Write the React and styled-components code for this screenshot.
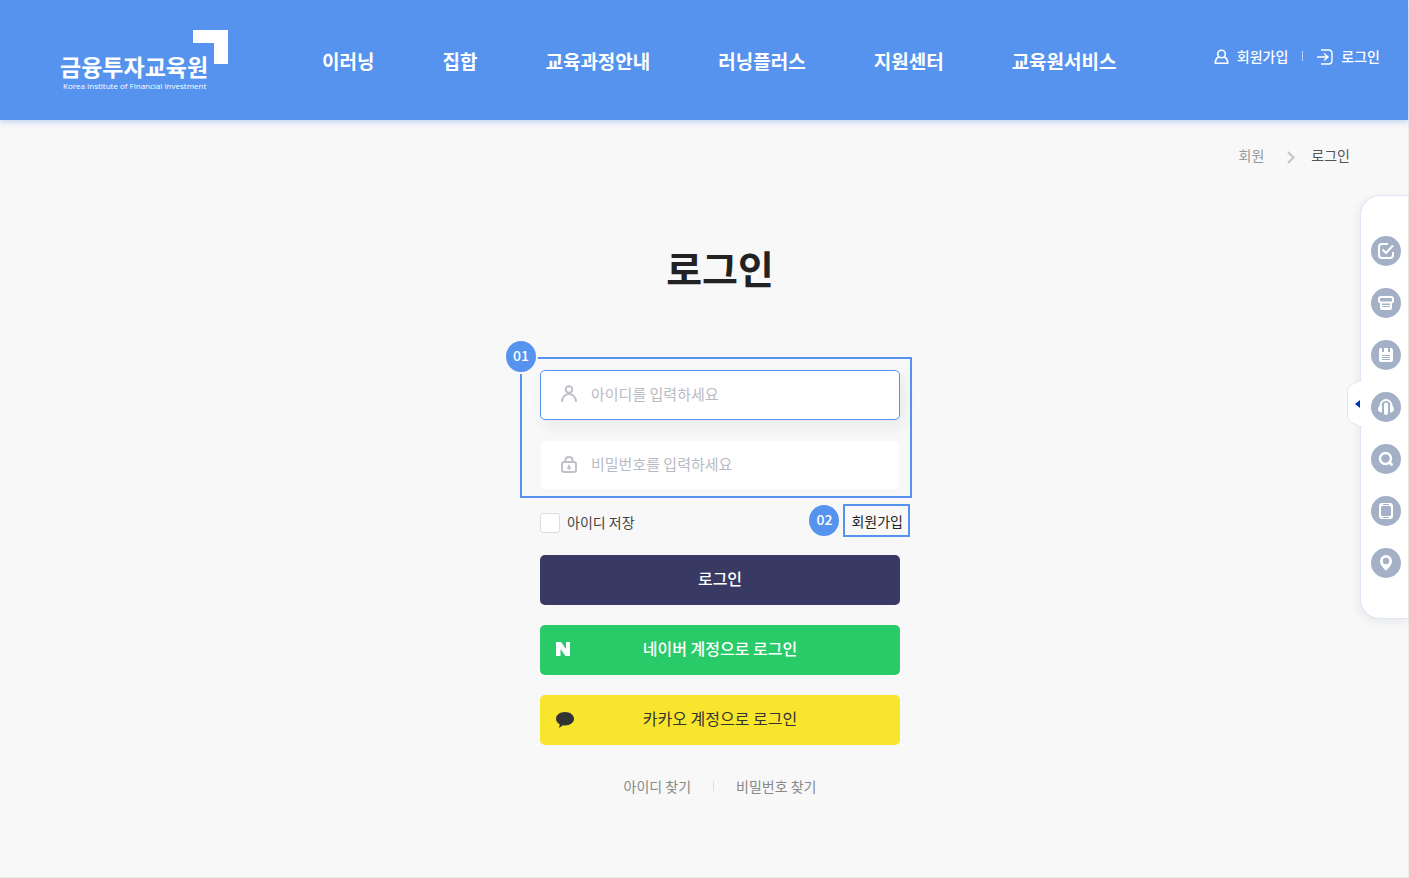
import { useState } from 'react'
import styled, { createGlobalStyle } from 'styled-components'

const GlobalStyle = createGlobalStyle`
    * {
        box-sizing: border-box;
    }

    body {
        margin: 0;
        background-color: #f8f8f8;
        font-family: "Noto Sans CJK KR", "Noto Sans", sans-serif;
        font-size: 14px;
        color: #222;
    }

    a {
        color: inherit;
        text-decoration: none;
    }

    button, input {
        font-family: inherit;
    }
`

const Page = styled.div`
    min-height: 100vh;
    border-right: 1px solid #ececec;
    border-bottom: 1px solid #ececec;
`

const Header = styled.header`
    display: flex;
    align-items: center;
    height: 120px;
    padding: 0 28px 0 60px;
    background-color: #5693ef;
    box-shadow: 0 2px 6px rgba(86, 147, 239, 0.35);
    color: white;
`

const Logo = styled.a`
    display: block;
    line-height: 0;
    flex-shrink: 0;
`

const Nav = styled.nav`
    display: flex;
    gap: 68px;
    margin-left: 94px;
    padding-top: 2px;
    font-size: 19px;
    line-height: 28px;
    font-weight: 700;
    white-space: nowrap;
`

const UserMenu = styled.div`
    display: flex;
    align-items: center;
    margin-left: auto;
    padding-bottom: 8px;
    line-height: 20px;
    font-weight: 500;
    white-space: nowrap;

    a {
        display: flex;
        align-items: center;
        gap: 8px;
    }

    svg {
        margin-top: 2px;
    }
`

const Divider = styled.span`
    width: 1px;
    height: 10px;
    margin: 0 ${props => props.$space};
    background-color: ${props => props.$color};
`

const Breadcrumb = styled.nav`
    display: flex;
    justify-content: flex-end;
    align-items: center;
    padding: 25px 58px 0 0;
    line-height: 20px;
    color: #999;

    svg {
        margin: 4px 16px 0 23px;
    }

    [aria-current] {
        color: #555;
    }
`

const Content = styled.div`
    padding: 72px 0 70px 32px;
`

const Main = styled.main`
    width: 360px;
    margin: 0 auto;
`

const Title = styled.h1`
    margin: 0 0 60px;
    font-size: 39px;
    line-height: 60px;
    font-weight: 700;
    text-align: center;
`

const Fields = styled.div`
    position: relative;
    display: flex;
    flex-direction: column;
    gap: 20px;
    margin: 0 -12px 0 -20px;
    padding: 11px 10px 6px 18px;
    border: 2px solid #5693ef;
`

const Badge = styled.span`
    display: block;
    width: 30px;
    height: 31px;
    border-radius: 50%;
    background-color: #5693ef;
    color: white;
    font-size: 14px;
    line-height: 28px;
    font-weight: 500;
    text-align: center;
`

const CornerBadge = styled(Badge)`
    position: absolute;
    top: -18px;
    left: -16px;
    box-shadow: 0 0 0 2px #f8f8f8;
`

const Field = styled.label`
    display: flex;
    align-items: center;
    gap: 13px;
    height: 50px;
    padding: 0 19px 2px;
    border: 1px solid transparent;
    border-radius: 5px;
    background-color: white;
    background-clip: padding-box;

    ${props => props.$active && `
        border-color: #5693ef;
        box-shadow: 4px 6px 14px rgba(57, 58, 99, 0.08);
    `}
`

const Input = styled.input`
    flex: 1;
    min-width: 0;
    padding: 0;
    border: 0;
    outline: none;
    background: none;
    font-size: 15px;
    line-height: 24px;
    color: #222;

    &::placeholder {
        color: #b9bbc4;
    }
`

const Options = styled.div`
    display: flex;
    align-items: center;
    margin: 6px -10px 18px 0;
`

const Remember = styled.label`
    display: flex;
    align-items: flex-start;
    gap: 7px;
    margin: 4px auto 0 0;
    line-height: 18px;
    color: #444;
`

const Checkbox = styled.input`
    appearance: none;
    width: 20px;
    height: 20px;
    margin: 0;
    border: 1px solid #ddd;
    border-radius: 3px;
    background-color: white;

    &:checked {
        background-color: #5693ef;
    }
`

const JoinLink = styled.a`
    margin-left: 4px;
    padding: 5px 5px 4px 6px;
    border: 2px solid #5693ef;
    line-height: 20px;
    white-space: nowrap;
`

const Buttons = styled.div`
    display: flex;
    flex-direction: column;
    gap: 20px;
`

const Button = styled.button`
    display: grid;
    grid-template-columns: 20px 1fr 20px;
    align-items: center;
    height: 50px;
    padding: 0 15px 4px;
    border: 0;
    border-radius: 5px;
    background-color: ${props => props.$bg};
    color: ${props => props.$color || 'white'};
    font-size: 16px;
    line-height: 24px;
    font-weight: ${props => props.$weight || 500};
    cursor: pointer;

    svg {
        margin-top: 2px;
    }

    span {
        grid-column: 2;
        grid-row: 1;
    }
`

const FindLinks = styled.div`
    display: flex;
    justify-content: center;
    align-items: center;
    margin-top: 31px;
    line-height: 20px;
    color: #888;
`

const QuickMenu = styled.aside`
    position: fixed;
    top: 195px;
    right: 1px;
    display: flex;
    flex-direction: column;
    gap: 22px;
    padding: 40px 7px 40px 10px;
    border: 1px solid #e1e6f6;
    border-right: 0;
    border-radius: 20px 0 0 20px;
    background-color: white;
    box-shadow: -2px 3px 8px rgba(57, 58, 99, 0.08);
`

const QuickLink = styled.a`
    display: block;
    width: 30px;
    height: 30px;
    border-radius: 50%;
    background-color: #a3b0c5;
    color: white;

    svg {
        display: block;
    }
`

const Toggle = styled.button`
    position: absolute;
    top: 183px;
    left: -14px;
    width: 15px;
    height: 49px;
    padding: 0;
    border: 0;
    background: none;
    cursor: pointer;

    svg {
        display: block;
    }
`

const quickLinks = [
    {
        label: '수강신청',
        icon: <path d="M17 8h-6a3 3 0 0 0-3 3v8a3 3 0 0 0 3 3h8a3 3 0 0 0 3-3v-3M11.500 13.500l3.500 3.500 7-7.500" fill="none" stroke="currentColor" strokeWidth="2" />,
    },
    {
        label: '증명서 출력',
        icon: (
            <g fill="none" stroke="currentColor" strokeWidth="2">
                <path d="M10 14.500c-1.500 0-2-.8-2-2V11c0-1.500.8-2 2-2h10c1.200 0 2 .5 2 2v1.500c0 1.200-.5 2-2 2z" />
                <path d="M10 14v6c0 .8.400 1 1 1h8c.6 0 1-.2 1-1v-6" />
                <path d="M11 17.500h8M11 19.500h8" strokeWidth="1" />
            </g>
        ),
    },
    {
        label: '교육일정',
        icon: (
            <>
                <path d="M9 8h2v4h2V8h4v4h2V8h2l1 2v10q0 2-2 2H10q-2 0-2-2V10z" fill="currentColor" />
                <path d="M11 15.500h8M11 17.500h8M11 19.500h8" stroke="#a3b0c5" />
            </>
        ),
    },
    {
        label: '고객센터',
        icon: (
            <>
                <path d="M9.500 16v-2.500a5.500 5.500 0 0 1 11 0V16" fill="none" stroke="currentColor" strokeWidth="2" />
                <path d="M11 13v7.500c-2.500 0-4-1.500-4-3.500s1.500-3.500 4-4zM19 13v7.500c2.500 0 4-1.500 4-3.500s-1.500-3.500-4-4z" fill="currentColor" />
                <path d="M15 12.500v8.500" stroke="currentColor" strokeWidth="4" strokeLinecap="round" />
            </>
        ),
    },
    {
        label: '검색',
        icon: (
            <g fill="none" stroke="currentColor">
                <circle cx="14.500" cy="14.500" r="5.500" strokeWidth="2.400" />
                <path d="M18.500 18.500l2 2" strokeWidth="2.800" strokeLinecap="round" />
            </g>
        ),
    },
    {
        label: '모바일',
        icon: (
            <>
                <rect x="8" y="7" width="14" height="16" rx="3" fill="currentColor" />
                <g fill="#a3b0c5">
                    <rect x="10" y="10" width="10" height="10" rx="1.500" />
                    <rect x="12" y="8" width="6" height="1" />
                    <rect x="12" y="21" width="6" height="1" />
                </g>
            </>
        ),
    },
    {
        label: '오시는 길',
        icon: <path fillRule="evenodd" d="M15 7a6 6 0 0 0-6 6c0 4 3.500 7 6 10 2.500-3 6-6 6-10a6 6 0 0 0-6-6zm0 2.800a3.200 3.200 0 1 1 0 6.400 3.200 3.200 0 0 1 0-6.400z" fill="currentColor" />,
    },
]

const menu = ['이러닝', '집합', '교육과정안내', '러닝플러스', '지원센터', '교육원서비스']

function LogoMark() {
    return (
        <svg width="168" height="60" viewBox="0 0 168 60" fill="white">
            <path d="M133 0h35v34h-14V13h-21z" />
            <text x="0" y="46" fontSize="23" fontWeight="700">금융투자교육원</text>
            <text x="3" y="59" fontFamily="Open Sans, sans-serif" fontSize="8">Korea Institute of Financial Investment</text>
        </svg>
    )
}

function App() {
    const [values, setValues] = useState({ userId: '', password: '' })
    const [active, setActive] = useState('userId')

    const handleChange = (e) => {
        setValues(prev => ({ ...prev, [e.target.name]: e.target.value }))
    }

    return (
        <Page>
            <GlobalStyle />
            <Header>
                <Logo href="#" aria-label="금융투자교육원"><LogoMark /></Logo>
                <Nav>
                    {menu.map(item => <a href="#" key={item}>{item}</a>)}
                </Nav>
                <UserMenu>
                    <a href="#">
                        <svg width="15" height="16" viewBox="0 0 15 16" fill="none" stroke="currentColor" strokeWidth="1.600">
                            <circle cx="7.500" cy="5" r="3.800" />
                            <path d="M4.800 7.800C2.500 9.200 1.200 11 1.200 14.300h12.600c0-3.300-1.300-5.100-3.600-6.500" strokeLinejoin="round" />
                        </svg>
                        회원가입
                    </a>
                    <Divider $space="14px" $color="rgba(255, 255, 255, 0.6)" />
                    <a href="#">
                        <svg width="16" height="16" viewBox="0 0 16 16" fill="none" stroke="currentColor" strokeWidth="1.400">
                            <path d="M4 1h7.500c2.200 0 3.500 1.300 3.500 3.500v7c0 2.200-1.300 3.500-3.500 3.500H4M0 8h11M7 4.500L11 8l-4 3.500" />
                        </svg>
                        로그인
                    </a>
                </UserMenu>
            </Header>

            <Breadcrumb>
                <a href="#">회원</a>
                <svg width="8" height="13" viewBox="0 0 8 13" fill="none" stroke="#c4c4c6" strokeWidth="2">
                    <path d="M1 1l5.500 5.500L1 12" />
                </svg>
                <a href="#" aria-current="page">로그인</a>
            </Breadcrumb>

            <Content>
                <Main>
                    <Title>로그인</Title>
                    <form onSubmit={e => e.preventDefault()}>
                        <Fields>
                            <CornerBadge>01</CornerBadge>
                            <Field $active={active === 'userId'}>
                                <svg width="18" height="18" viewBox="0 0 18 18" fill="none" stroke="#bfc0c8" strokeWidth="2">
                                    <circle cx="9" cy="4.500" r="3.300" />
                                    <path d="M2 17c0-4.500 2.800-8 7-8s7 3.500 7 8" />
                                </svg>
                                <Input
                                    name="userId"
                                    aria-label="아이디"
                                    placeholder="아이디를 입력하세요"
                                    value={values.userId}
                                    onChange={handleChange}
                                    onFocus={() => setActive('userId')}
                                />
                            </Field>
                            <Field $active={active === 'password'}>
                                <svg width="18" height="18" viewBox="0 0 18 18" fill="none" stroke="#bfc0c8" strokeWidth="2">
                                    <rect x="2" y="7" width="14" height="10" rx="2" />
                                    <path d="M5.500 7V5C5.500 3 7 2 9 2s3.500 1 3.500 3v2" />
                                    <path d="M9 9l2 4-1 1.500H8L7 13z" fill="#bfc0c8" stroke="none" />
                                </svg>
                                <Input
                                    type="password"
                                    name="password"
                                    aria-label="비밀번호"
                                    placeholder="비밀번호를 입력하세요"
                                    value={values.password}
                                    onChange={handleChange}
                                    onFocus={() => setActive('password')}
                                />
                            </Field>
                        </Fields>

                        <Options>
                            <Remember>
                                <Checkbox type="checkbox" name="remember" />
                                아이디 저장
                            </Remember>
                            <Badge>02</Badge>
                            <JoinLink href="#">회원가입</JoinLink>
                        </Options>

                        <Buttons>
                            <Button type="submit" $bg="#393a63"><span>로그인</span></Button>
                            <Button type="button" $bg="#28cb68">
                                <svg width="16" height="14" viewBox="0 0 16 14" fill="currentColor">
                                    <path d="M1 0h5l5 7V0h4v14h-4.500L5.500 7v7H1z" />
                                </svg>
                                <span>네이버 계정으로 로그인</span>
                            </Button>
                            <Button type="button" $bg="#f8e52e" $color="#333" $weight={400}>
                                <svg width="20" height="17" viewBox="0 0 20 17" fill="currentColor">
                                    <path d="M10 1c5 0 9 2.900 9 6.800s-4 6.700-9 6.700c-.7 0-1.400 0-2-.2L4 17l.8-3.600C2.500 12.200 1 10.200 1 7.800 1 3.900 5 1 10 1z" />
                                </svg>
                                <span>카카오 계정으로 로그인</span>
                            </Button>
                        </Buttons>
                    </form>

                    <FindLinks>
                        <a href="#">아이디 찾기</a>
                        <Divider $space="22px" $color="#ddd" />
                        <a href="#">비밀번호 찾기</a>
                    </FindLinks>
                </Main>
            </Content>

            <QuickMenu>
                <Toggle type="button" aria-label="퀵메뉴 열기">
                    <svg width="15" height="49" viewBox="0 0 15 49">
                        <path d="M15 1L7 4.500Q.5 7 .5 12v25q0 5 6.500 7.500l8 3.500" fill="white" stroke="#e1e6f6" />
                        <path d="M8 25l5-4v8z" fill="#0038a8" />
                    </svg>
                </Toggle>
                {quickLinks.map(({ label, icon }) => (
                    <QuickLink href="#" aria-label={label} key={label}>
                        <svg width="30" height="30" viewBox="0 0 30 30">{icon}</svg>
                    </QuickLink>
                ))}
            </QuickMenu>
        </Page>
    )
}

export default App
